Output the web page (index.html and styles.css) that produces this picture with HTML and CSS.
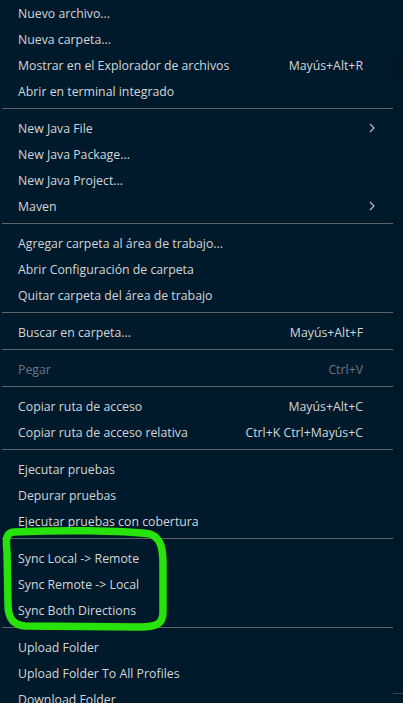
FILE: index.html
```html
<!DOCTYPE html>
<html lang="es">
<head>
<meta charset="utf-8">
<link rel="stylesheet" href="styles.css">
</head>
<body>
<div class="screen">
  <div class="menu">
    <div class="item"><span class="label">Nuevo archivo...</span></div>
    <div class="item"><span class="label">Nueva carpeta...</span></div>
    <div class="item"><span class="label">Mostrar en el Explorador de archivos</span><span class="key">Mayús+Alt+R</span></div>
    <div class="item"><span class="label">Abrir en terminal integrado</span></div>
    <div class="sep"></div>
    <div class="item"><span class="label">New Java File</span><svg class="chev" width="6" height="10" viewBox="0 0 6 10"><polyline points="1,1 5,5 1,9" fill="none" stroke="#b9bdc2" stroke-width="1.2"/></svg></div>
    <div class="item"><span class="label">New Java Package...</span></div>
    <div class="item"><span class="label">New Java Project...</span></div>
    <div class="item"><span class="label">Maven</span><svg class="chev" width="6" height="10" viewBox="0 0 6 10"><polyline points="1,1 5,5 1,9" fill="none" stroke="#b9bdc2" stroke-width="1.2"/></svg></div>
    <div class="sep"></div>
    <div class="item"><span class="label">Agregar carpeta al área de trabajo...</span></div>
    <div class="item"><span class="label">Abrir Configuración de carpeta</span></div>
    <div class="item"><span class="label">Quitar carpeta del área de trabajo</span></div>
    <div class="sep"></div>
    <div class="item"><span class="label">Buscar en carpeta...</span><span class="key">Mayús+Alt+F</span></div>
    <div class="sep"></div>
    <div class="item disabled"><span class="label">Pegar</span><span class="key">Ctrl+V</span></div>
    <div class="sep"></div>
    <div class="item"><span class="label">Copiar ruta de acceso</span><span class="key">Mayús+Alt+C</span></div>
    <div class="item"><span class="label">Copiar ruta de acceso relativa</span><span class="key">Ctrl+K Ctrl+Mayús+C</span></div>
    <div class="sep"></div>
    <div class="item"><span class="label">Ejecutar pruebas</span></div>
    <div class="item"><span class="label">Depurar pruebas</span></div>
    <div class="item"><span class="label">Ejecutar pruebas con cobertura</span></div>
    <div class="sep"></div>
    <div class="item"><span class="label">Sync Local -&gt; Remote</span></div>
    <div class="item"><span class="label">Sync Remote -&gt; Local</span></div>
    <div class="item"><span class="label">Sync Both Directions</span></div>
    <div class="sep"></div>
    <div class="item"><span class="label">Upload Folder</span></div>
    <div class="item"><span class="label">Upload Folder To All Profiles</span></div>
    <div class="item"><span class="label">Download Folder</span></div>
  </div>
  <div class="strip">
    <div class="thumb"></div>
    <div class="edge"></div>
  </div>
  <svg class="mark" width="403" height="703" viewBox="0 0 403 703">
    <path d="M14,532 C60,530 120,530 150,534 C161,538 163,548 163,565 L163,612 C163,623 158,627 140,627 L25,626 C12,625 8,617 8,604 L7,552 C6,540 5,533 14,532 Z" fill="none" stroke="#27e20b" stroke-width="7.5" stroke-linejoin="round"/>
  </svg>
</div>
</body>
</html>
```

FILE: styles.css
```css
html, body {
  margin: 0;
  padding: 0;
  background: #011a2b;
}
.screen {
  position: relative;
  width: 403px;
  height: 703px;
  overflow: hidden;
  display: flex;
  background: #011a2b;
}
.menu {
  width: 393px;
  display: flex;
  flex-direction: column;
  font-family: "Open Sans", "Noto Sans", sans-serif;
  font-size: 12.3px;
  color: #d2d6da;
}
.item {
  height: 26px;
  flex: 0 0 26px;
  display: flex;
  align-items: center;
  padding: 0 17px 0 18px;
  position: relative;
  white-space: nowrap;
}
.label {
  flex: 1;
}
.key {
  margin-right: 13px;
}
.chev {
  position: absolute;
  right: 18px;
  top: 8px;
}
.disabled {
  color: #6b7682;
}
.sep {
  flex: 0 0 1px;
  height: 1px;
  margin: 4px 0 6px 2px;
  background: #5f6468;
}
.strip {
  width: 10px;
  position: relative;
  background: #011827;
}
.thumb {
  position: absolute;
  left: 0;
  top: 60px;
  width: 10px;
  height: 18px;
  background: #021522;
}
.edge {
  position: absolute;
  left: 0;
  top: 693px;
  width: 10px;
  height: 1px;
  background: #3a4650;
}
.mark {
  position: absolute;
  left: 0;
  top: 0;
  pointer-events: none;
}
```
